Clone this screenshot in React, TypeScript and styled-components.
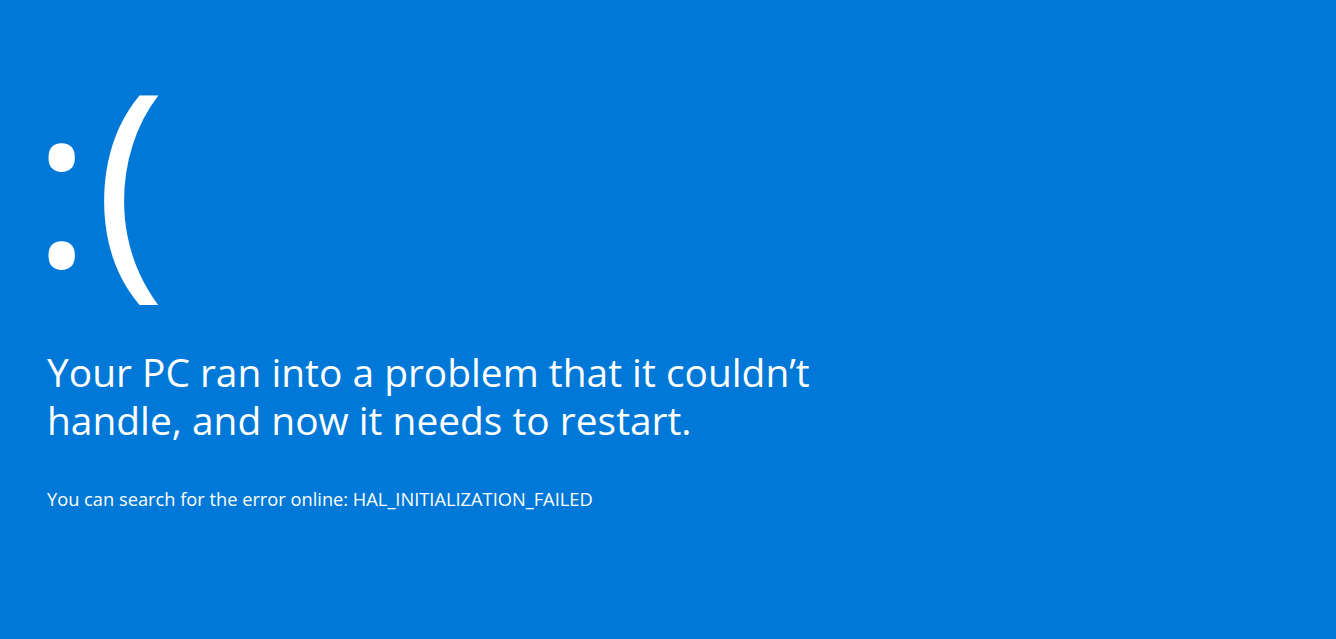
import React from "react";
import styled, { createGlobalStyle } from "styled-components";

const Global = createGlobalStyle`
  html, body { margin: 0; padding: 0; background: #0078d7; }
  body { width: 1336px; height: 639px; overflow: hidden; }
`;

const Screen = styled.main`
  box-sizing: border-box;
  width: 1336px;
  height: 639px;
  background: #0078d7;
  color: #ffffff;
  padding: 24px 0 0 47px;
  display: flex;
  flex-direction: column;
  font-family: "Open Sans", "Noto Sans", sans-serif;
`;

const Face = styled.div`
  height: 300px;
  margin-left: -15px;
  font-size: 241px;
  line-height: 300px;
  font-weight: 400;
  white-space: nowrap;
`;

const Eyes = styled.span`
  font-size: 226px;
  font-weight: 450;
`;

const Mouth = styled.span`
  font-size: 241px;
  margin-left: 3px;
`;

const Headline = styled.h1`
  margin: 24px 0 0;
  font-weight: 400;
  font-size: 38.9px;
  line-height: 48px;
  letter-spacing: 0;
`;

const Detail = styled.p`
  margin: 43px 0 0;
  font-weight: 400;
  font-size: 18.25px;
  line-height: 24px;
`;

export default function App() {
  return (
    <>
      <Global />
      <Screen>
        <Face>
          <Eyes>:</Eyes>
          <Mouth>(</Mouth>
        </Face>
        <Headline>
          Your PC ran into a problem that it couldn’t
          <br />
          handle, and now it needs to restart.
        </Headline>
        <Detail>You can search for the error online: HAL_INITIALIZATION_FAILED</Detail>
      </Screen>
    </>
  );
}
